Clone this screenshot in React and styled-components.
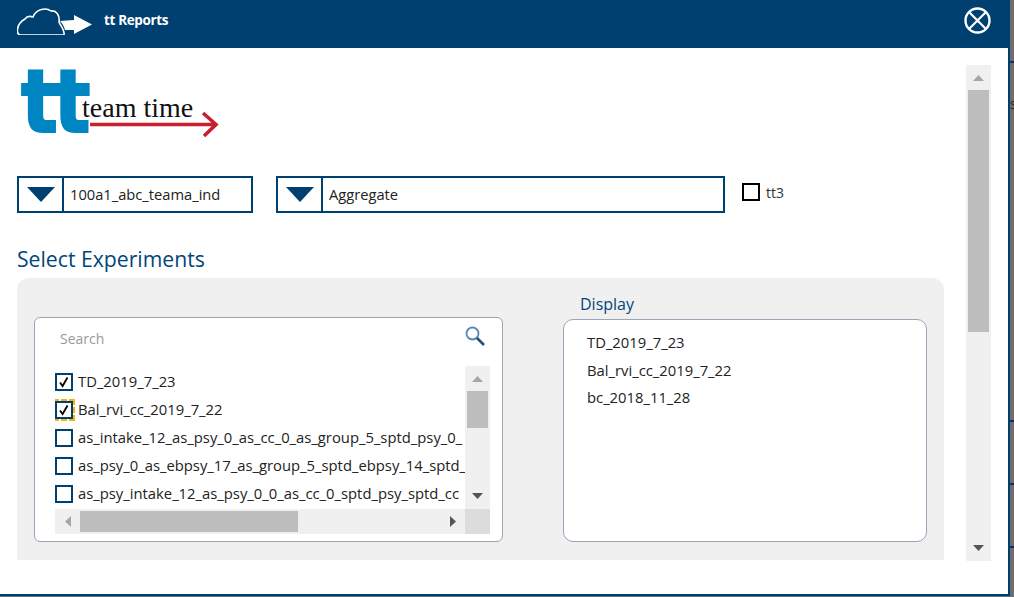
import React from "react";
import styled, { createGlobalStyle } from "styled-components";

const navy = "#004071";
const uiFont = `"Open Sans", "Noto Sans", "Liberation Sans", sans-serif`;

const GlobalStyle = createGlobalStyle`
  * {
    box-sizing: border-box;
  }
  html, body {
    margin: 0;
    height: 100%;
    overflow: hidden;
    background: #6e6e6e;
    font-family: ${uiFont};
  }
`;

const Page = styled.div`
  display: flex;
  height: 597px;
`;

const Modal = styled.div`
  width: 1010px;
  height: 596px;
  flex: none;
  background: #fff;
  border-bottom: 2px solid ${navy};
  display: flex;
  flex-direction: column;
`;

// what shows of the page behind the dialog
const BehindStrip = styled.div`
  width: 4px;
  flex: none;
  overflow: hidden;
  display: flex;
  flex-direction: column;
`;

const BehindLine = styled.div`
  height: 2px;
  flex: none;
  margin-top: ${(p) => p.$top}px;
  background: #12324f;
`;

const BehindText = styled.div`
  flex: none;
  margin-top: 33px;
  height: 16px;
  font-size: 14px;
  line-height: 16px;
  color: #2c2c2c;
`;

const Header = styled.header`
  height: 48px;
  flex: none;
  background: ${navy};
  display: flex;
  align-items: center;
  padding: 0 19px 8px 17px;
  color: #fff;
`;

const HeaderTitle = styled.div`
  flex: 1;
  margin-left: 11px;
  font-size: 13.5px;
  font-weight: 700;
  letter-spacing: -0.35px;
`;

const Body = styled.div`
  flex: 1;
  min-height: 0;
  display: flex;
  padding: 18px 17px 33px 17px;
  gap: 22px;
  border-right: 2px solid ${navy};
`;

const Content = styled.div`
  width: 927px;
  flex: none;
  display: flex;
  flex-direction: column;
`;

const Logo = styled.div`
  position: relative;
  height: 110px;
  flex: none;
`;

const LogoLetters = styled.div`
  position: absolute;
  left: 4px;
  top: -19px;
  font-family: "DejaVu Sans", sans-serif;
  font-size: 87px;
  line-height: 110px;
  font-weight: 700;
  letter-spacing: -5px;
  color: #0085c3;
  -webkit-text-stroke: 2px #0085c3;
  transform: scaleX(0.89);
  transform-origin: left top;
`;

const LogoWords = styled.div`
  position: absolute;
  left: 65px;
  top: 27px;
  font-family: "Liberation Serif", serif;
  font-size: 28px;
  line-height: 30px;
  color: #111;
`;

const LogoArrow = styled.svg`
  position: absolute;
  left: 73px;
  top: 44px;
`;

const Controls = styled.div`
  display: flex;
  align-items: flex-start;
  flex: none;
`;

const Dropdown = styled.div`
  width: ${(p) => p.$width}px;
  height: 37px;
  margin-right: ${(p) => p.$gap}px;
  border: 2px solid ${navy};
  display: flex;
  align-items: center;
`;

const DropdownButton = styled.div`
  width: 45px;
  height: 100%;
  flex: none;
  border-right: 2px solid ${navy};
  display: flex;
  align-items: center;
  justify-content: center;
`;

const DropdownArrow = styled.div`
  width: 0;
  height: 0;
  border-left: 14px solid transparent;
  border-right: 14px solid transparent;
  border-top: 15px solid ${navy};
`;

const DropdownValue = styled.div`
  padding: 0 0 2px 6px;
  font-size: 14.7px;
  color: #222;
`;

const Tt3 = styled.label`
  display: flex;
  align-items: center;
  gap: 6px;
  margin-top: 6px;
  font-size: 14px;
  line-height: 18px;
  color: #333;
`;

const Tt3Text = styled.span`
  padding-top: 2px;
`;

const BlackBox = styled.span`
  width: 18px;
  height: 18px;
  border: 2px solid #000;
`;

const Heading = styled.h2`
  flex: none;
  height: 65px;
  margin: 0;
  padding-top: 32px;
  font-size: 21.2px;
  line-height: 28px;
  font-weight: 400;
  color: #00467a;
`;

const Panel = styled.section`
  height: 282px;
  flex: none;
  background: #f0f0f0;
  border-radius: 12px 12px 0 0;
  padding: 39px 17px 18px;
  display: flex;
  justify-content: space-between;
`;

const SearchBox = styled.div`
  width: 469px;
  height: 225px;
  background: #fff;
  border: 1px solid #9aa5b5;
  border-radius: 6px;
  padding: 0 12px 7px 20px;
  display: flex;
  flex-direction: column;
`;

const SearchRow = styled.div`
  height: 48px;
  flex: none;
  display: flex;
  align-items: flex-start;
  justify-content: space-between;
  padding: 8px 5px 0 5px;
  font-size: 14px;
  line-height: 26px;
  color: #999;
`;

const ListGrid = styled.div`
  flex: 1;
  display: grid;
  grid-template-columns: 410px 25px;
  grid-template-rows: 143px 25px;
`;

const List = styled.div`
  overflow: hidden;
  padding-top: 7px;
  display: flex;
  flex-direction: column;
  gap: 9.75px;
`;

const Row = styled.div`
  display: flex;
  align-items: center;
  gap: 5px;
  height: 18.25px;
  white-space: nowrap;
  font-size: 14.8px;
  line-height: 18px;
  color: #222;
`;

const RowLabel = styled.span`
  padding-bottom: 2px;
`;

const CheckBox = styled.span`
  width: 18px;
  height: 18px;
  flex: none;
  border: 2px solid ${navy};
  display: flex;
  align-items: center;
  justify-content: center;
  outline: ${(p) => (p.$focused ? "2px dashed #f5b50a" : "none")};
  outline-offset: 0;
`;

const VBar = styled.div`
  background: #f0f0f0;
  display: flex;
  flex-direction: column;
  align-items: center;
  padding: 0 2px;
`;

const VThumb = styled.div`
  width: 100%;
  flex: none;
  height: ${(p) => p.$size}px;
  background: #bdbdbd;
`;

const HBar = styled.div`
  background: #f0f0f0;
  display: flex;
  align-items: center;
  padding: 2px 0;
  height: 100%;
`;

const HThumb = styled.div`
  height: 100%;
  width: ${(p) => p.$size}px;
  flex: none;
  background: #bdbdbd;
`;

const ArrowCell = styled.div`
  flex: ${(p) => (p.$grow ? 1 : "none")};
  width: ${(p) => (p.$horizontal ? (p.$grow ? "auto" : "25px") : "100%")};
  height: ${(p) => (p.$horizontal ? "100%" : p.$grow ? "auto" : "25px")};
  display: flex;
  align-items: ${(p) => (p.$end === "bottom" ? "flex-end" : "center")};
  justify-content: ${(p) => (p.$end === "right" ? "flex-end" : "center")};
  padding: ${(p) => (p.$end === "bottom" ? "0 0 10px" : p.$end === "right" ? "0 9px 0 0" : "0")};
`;

const Corner = styled.div`
  background: #dcdcdc;
`;

const DisplayColumn = styled.div`
  width: 364px;
  margin-top: -39px;
  display: flex;
  flex-direction: column;
`;

const DisplayLabel = styled.div`
  height: 41px;
  padding: 15px 0 0 17px;
  font-size: 16px;
  line-height: 22px;
  color: #00467a;
`;

const DisplayBox = styled.div`
  flex: 1;
  background: #fff;
  border: 1px solid #9aa5b5;
  border-radius: 10px;
  padding: 9px 23px;
`;

const DisplayItem = styled.div`
  height: 27.5px;
  font-size: 14.8px;
  line-height: 27px;
  color: #222;
`;

const PageBar = styled.div`
  width: 25px;
  flex: none;
  margin-top: -1px;
  background: #f0f0f0;
  display: flex;
  flex-direction: column;
  align-items: center;
  padding: 0 2px;
`;

const Triangle = ({ dir, color }) => {
  const points = {
    up: "0,6 11,6 5.5,0",
    down: "0,0 11,0 5.5,6",
    left: "6,0 6,11 0,5.5",
    right: "0,0 0,11 6,5.5",
  }[dir];
  const vertical = dir === "up" || dir === "down";
  return (
    <svg width={vertical ? 11 : 6} height={vertical ? 6 : 11} viewBox={vertical ? "0 0 11 6" : "0 0 6 11"}>
      <polygon points={points} fill={color} />
    </svg>
  );
};

const CloudArrow = () => (
  <svg width="76" height="30" viewBox="0 0 76 30">
    <path d="M3 30 C-1 29 -1 19 8 14 C10 11 13 11 16 12 C19 4 29 2 34 6 C39 5 43 10 42 17 C43 20 48 25 47 30 Z" fill="none" stroke="#fff" strokeWidth="1.6" />
    <path d="M43 16 L57 15 L57 10 L75 19.5 L57 29 L57 25 L48 25 C47 21 45 18 43 16 Z" fill="#fff" />
  </svg>
);

const CloseIcon = () => (
  <svg width="27" height="27" viewBox="0 0 27 27">
    <circle cx="13.5" cy="13.5" r="12" fill="none" stroke="#fff" strokeWidth="2.4" />
    <path d="M5.5 5.5 L21.5 21.5 M21.5 5.5 L5.5 21.5" stroke="#fff" strokeWidth="2.2" />
  </svg>
);

const SearchIcon = () => (
  <svg width="20" height="20" viewBox="0 0 20 20">
    <circle cx="7.5" cy="7.5" r="6" fill="none" stroke="#5b87b5" strokeWidth="1.8" />
    <path d="M12 12 L19 19" stroke="#1d4f80" strokeWidth="2.6" />
  </svg>
);

const CheckMark = () => (
  <svg width="12" height="12" viewBox="0 0 12 12">
    <path d="M2 6.5 L4.6 10 L9.5 1.5" fill="none" stroke="#000" strokeWidth="1.8" />
  </svg>
);

const experiments = [
  { name: "TD_2019_7_23", checked: true },
  { name: "Bal_rvi_cc_2019_7_22", checked: true, focused: true },
  { name: "as_intake_12_as_psy_0_as_cc_0_as_group_5_sptd_psy_0_" },
  { name: "as_psy_0_as_ebpsy_17_as_group_5_sptd_ebpsy_14_sptd_" },
  { name: "as_psy_intake_12_as_psy_0_0_as_cc_0_sptd_psy_sptd_cc" },
];

const selected = ["TD_2019_7_23", "Bal_rvi_cc_2019_7_22", "bc_2018_11_28"];

export default function App() {
  return (
    <Page>
      <GlobalStyle />
      <Modal>
        <Header>
          <CloudArrow />
          <HeaderTitle>tt Reports</HeaderTitle>
          <CloseIcon />
        </Header>
        <Body>
          <Content>
            <Logo>
              <LogoLetters>tt</LogoLetters>
              <LogoWords>team time</LogoWords>
              <LogoArrow width="130" height="30" viewBox="0 0 130 30">
                <path d="M0 14.5 L124 14.5 M113 3 L126 14.5 L114 26" fill="none" stroke="#c8202f" strokeWidth="3.6" />
              </LogoArrow>
            </Logo>
            <Controls>
              <Dropdown $width={236} $gap={23}>
                <DropdownButton><DropdownArrow /></DropdownButton>
                <DropdownValue>100a1_abc_teama_ind</DropdownValue>
              </Dropdown>
              <Dropdown $width={449} $gap={17}>
                <DropdownButton><DropdownArrow /></DropdownButton>
                <DropdownValue>Aggregate</DropdownValue>
              </Dropdown>
              <Tt3><BlackBox /><Tt3Text>tt3</Tt3Text></Tt3>
            </Controls>
            <Heading>Select Experiments</Heading>
            <Panel>
              <SearchBox>
                <SearchRow>
                  <span>Search</span>
                  <SearchIcon />
                </SearchRow>
                <ListGrid>
                  <List>
                    {experiments.map((exp) => (
                      <Row key={exp.name}>
                        <CheckBox $focused={exp.focused}>{exp.checked && <CheckMark />}</CheckBox>
                        <RowLabel>{exp.name}</RowLabel>
                      </Row>
                    ))}
                  </List>
                  <VBar>
                    <ArrowCell><Triangle dir="up" color="#a6a6a6" /></ArrowCell>
                    <VThumb $size={37} />
                    <ArrowCell $grow $end="bottom"><Triangle dir="down" color="#555" /></ArrowCell>
                  </VBar>
                  <HBar>
                    <ArrowCell $horizontal><Triangle dir="left" color="#a6a6a6" /></ArrowCell>
                    <HThumb $size={218} />
                    <ArrowCell $horizontal $grow $end="right"><Triangle dir="right" color="#555" /></ArrowCell>
                  </HBar>
                  <Corner />
                </ListGrid>
              </SearchBox>
              <DisplayColumn>
                <DisplayLabel>Display</DisplayLabel>
                <DisplayBox>
                  {selected.map((name) => (
                    <DisplayItem key={name}>{name}</DisplayItem>
                  ))}
                </DisplayBox>
              </DisplayColumn>
            </Panel>
          </Content>
          <PageBar>
            <ArrowCell><Triangle dir="up" color="#a6a6a6" /></ArrowCell>
            <VThumb $size={242} />
            <ArrowCell $grow $end="bottom"><Triangle dir="down" color="#555" /></ArrowCell>
          </PageBar>
        </Body>
      </Modal>
      <BehindStrip>
        <BehindLine $top={61} />
        <BehindText>s</BehindText>
        <BehindLine $top={308} />
        <BehindLine $top={61} />
        <BehindLine $top={61} />
      </BehindStrip>
    </Page>
  );
}
